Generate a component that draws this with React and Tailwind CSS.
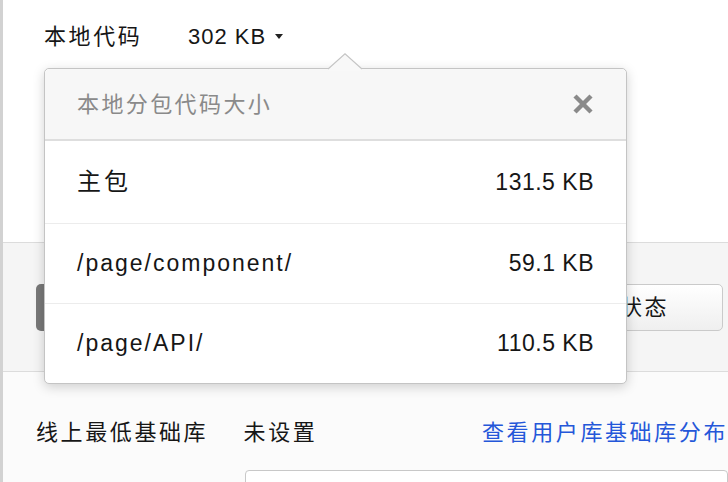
import React from 'react';

const rows = [
  { name: '主包', size: '131.5 KB', cjk: true, h: 'h-[83px] border-b border-[#ececec]' },
  { name: '/page/component/', size: '59.1 KB', h: 'h-[80px] border-b border-[#ececec]' },
  { name: '/page/API/', size: '110.5 KB', h: 'h-[79px]' },
];

const SizePopover = () => (
  <div className="absolute left-[41px] top-[68px] w-[583px] rounded-[5px] border border-[#c4c4c4] bg-white shadow-[0_3px_12px_rgba(0,0,0,0.18)]">
    {/* arrow pointing at the size value */}
    <svg className="absolute left-[283px] top-[-16px] w-[34px] h-[18px]" viewBox="0 0 34 18">
      <polygon points="0,16 17,0.5 34,16 34,18 0,18" fill="#f8f8f8" />
      <polyline points="0,16 17,0.8 34,16" fill="none" stroke="#c4c4c4" strokeWidth="1.2" />
    </svg>

    <div className="h-[72px] flex items-center justify-between pl-[32px] pr-[32px] bg-[#f7f7f7] border-b-2 border-[#dedede] rounded-t-[5px]">
      <span className="text-[22px] tracking-[2.4px] text-[#8a8a8a]">本地分包代码大小</span>
      <svg className="w-[22px] h-[22px]" viewBox="0 0 22 22">
        <line x1="3" y1="3" x2="19" y2="19" stroke="#8a8a8a" strokeWidth="4.4" />
        <line x1="19" y1="3" x2="3" y2="19" stroke="#8a8a8a" strokeWidth="4.4" />
      </svg>
    </div>

    {rows.map((row) => (
      <div key={row.name} className={`${row.h} flex items-center justify-between pl-[32px] pr-[32px]`}>
        <span className={row.cjk ? 'text-[24px] tracking-[3px]' : 'text-[23px] tracking-[2px]'}>
          {row.name}
        </span>
        <span className="text-[23px] tracking-[0.5px]">{row.size}</span>
      </div>
    ))}
  </div>
);

const App = () => {
  return (
    <div className="relative w-[728px] h-[482px] overflow-hidden border-l-[3px] border-[#d2d2d2] bg-white text-[#161616] font-['Liberation_Sans','Noto_Sans_CJK_SC',sans-serif]">
      <div className="h-[242px] pl-[41px] pt-[22px]">
        <div className="h-[28px] flex items-center">
          <span className="w-[144px] text-[22px] tracking-[2.6px]">本地代码</span>
          <span className="text-[22px] tracking-[1px]">302 KB</span>
          <span className="ml-[9px] w-0 h-0 border-x-[4px] border-t-[5px] border-x-transparent border-t-[#222]" />
        </div>
      </div>

      <div className="h-[130px] flex items-center justify-between pl-[33px] pr-[5px] bg-[#f5f5f5] border-y border-[#dcdcdc]">
        <div className="w-[220px] h-[47px] rounded-l-[5px] bg-[#787878]" />
        <button className="w-[206px] h-[47px] rounded-[5px] border border-[#cacaca] bg-gradient-to-b from-white to-[#efefef] text-[22px] tracking-[2.6px] text-[#161616]">
          审核状态
        </button>
      </div>

      <div className="pl-[33px] pt-[45px] bg-[#fbfbfb] h-full">
        <div className="h-[30px] flex items-center text-[22px] tracking-[2.6px]">
          <span className="w-[209px]">线上最低基础库</span>
          <span className="w-[240px]">未设置</span>
          <a href="#" className="text-[#2457d9] whitespace-nowrap">查看用户库基础库分布</a>
        </div>
        <div className="mt-[23px] ml-[209px] h-[40px] rounded-[4px] border border-[#c8c8c8] bg-white" />
      </div>

      <SizePopover />
    </div>
  );
};

export default App;
